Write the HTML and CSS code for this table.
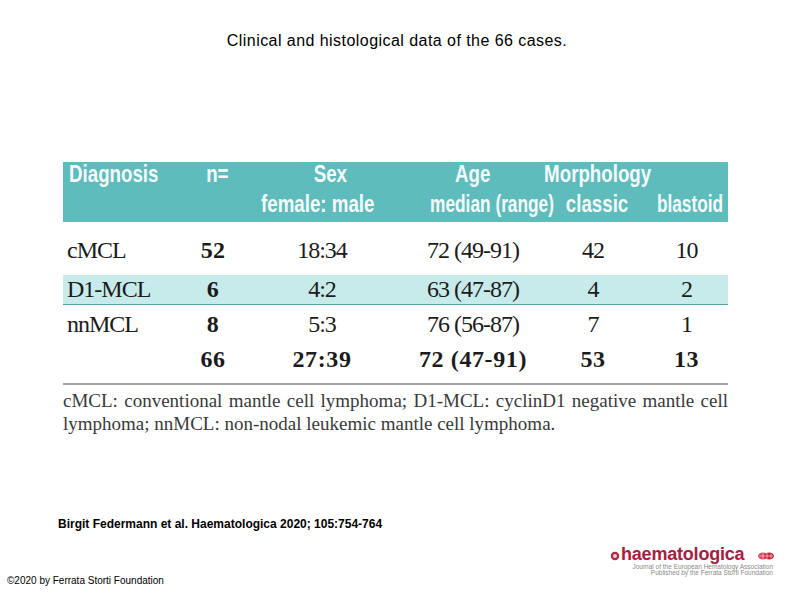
FILE: index.html
```html
<!DOCTYPE html>
<html lang="en">
<head>
<meta charset="utf-8">
<title>Clinical and histological data of the 66 cases.</title>
<link rel="stylesheet" href="styles.css">
</head>
<body>
<div class="page">
  <h1 class="title">Clinical and histological data of the 66 cases.</h1>

  <div class="figure">
    <div class="thead">
      <span class="h c1 r1 left"><span class="sq">Diagnosis</span></span>
      <span class="h c2 r1 sh-n"><span class="sq">n=</span></span>
      <span class="h c3 r1 sh-sex"><span class="sq">Sex</span></span>
      <span class="h c4 r1"><span class="sq">Age</span></span>
      <span class="h c5 r1 sh-morph"><span class="sq">Morphology</span></span>
      <span class="h c3 r2 sh-fm"><span class="sq">female: male</span></span>
      <span class="h c4 r2 sh-med"><span class="sq">median (range)</span></span>
      <span class="h c5 r2 sh-cl"><span class="sq">classic</span></span>
      <span class="h c6 r2 sh-bl"><span class="sq">blastoid</span></span>
    </div>

    <div class="row row-1">
      <span class="cell left">cMCL</span>
      <span class="cell b">52</span>
      <span class="cell">18:34</span>
      <span class="cell">72 (49-91)</span>
      <span class="cell">42</span>
      <span class="cell last">10</span>
    </div>
    <div class="row row-band">
      <span class="cell left">D1-MCL</span>
      <span class="cell b">6</span>
      <span class="cell">4:2</span>
      <span class="cell">63 (47-87)</span>
      <span class="cell">4</span>
      <span class="cell last">2</span>
    </div>
    <div class="row row-3">
      <span class="cell left">nnMCL</span>
      <span class="cell b">8</span>
      <span class="cell">5:3</span>
      <span class="cell">76 (56-87)</span>
      <span class="cell">7</span>
      <span class="cell last">1</span>
    </div>
    <div class="row row-total">
      <span class="cell left"></span>
      <span class="cell b">66</span>
      <span class="cell b">27:39</span>
      <span class="cell b">72 (47-91)</span>
      <span class="cell b">53</span>
      <span class="cell b last">13</span>
    </div>

    <div class="rule"></div>
    <p class="note">cMCL: conventional mantle cell lymphoma; D1-MCL: cyclinD1 negative mantle cell lymphoma; nnMCL: non-nodal leukemic mantle cell lymphoma.</p>
  </div>

  <p class="cite">Birgit Federmann et al. Haematologica 2020; 105:754-764</p>

  <div class="foot">
    <p class="copy">©2020 by Ferrata Storti Foundation</p>
    <div class="logo">
      <div class="logo-top">
        <svg class="logo-icon" width="10" height="10" viewBox="0 0 10 10" aria-hidden="true">
          <circle cx="5" cy="5" r="4.2" fill="#b3263f"/>
          <circle cx="5" cy="5" r="2" fill="#e9d3d6"/>
        </svg>
        <span class="logo-word">haematologica</span>
        <svg class="logo-cells" width="18" height="10" viewBox="0 0 18 10" aria-hidden="true">
          <ellipse cx="6" cy="5" rx="5" ry="3.5" fill="#d9485a"/>
          <ellipse cx="12" cy="5" rx="5" ry="3.5" fill="#c8283f"/>
          <path d="M2 5h14M6 2v6M10 2v6M14 3v4" stroke="#f3b7bf" stroke-width="0.8"/>
        </svg>
      </div>
      <div class="logo-sub">Journal of the European Hematology Association</div>
      <div class="logo-sub">Published by the Ferrata Storti Foundation</div>
    </div>
  </div>
</div>
</body>
</html>
```

FILE: styles.css
```css
html, body {
  margin: 0;
  padding: 0;
  background: #ffffff;
}

.page {
  width: 794px;
  height: 595px;
  padding-top: 31px;
  box-sizing: border-box;
  display: flex;
  flex-direction: column;
  font-family: "Liberation Sans", Arial, sans-serif;
  color: #000;
}

.title {
  margin: 0;
  font-size: 16px;
  line-height: 19px;
  font-weight: normal;
  letter-spacing: 0.45px;
  text-align: center;
}

.figure {
  margin: 112px 0 0 63px;
  width: 665px;
}

/* ---------- table header ---------- */
.thead {
  display: grid;
  grid-template-columns: 110px 80px 138px 164px 76px 97px;
  grid-template-rows: 24px 24px;
  row-gap: 6px;
  padding-bottom: 6px;
  background: #5fbcbd;
  color: #f4fbfb;
  font-family: "Liberation Sans", Arial, sans-serif;
  font-weight: bold;
  font-size: 24px;
  line-height: 24px;
}

.h {
  justify-self: center;
  white-space: nowrap;
}
.h .sq {
  display: inline-block;
  transform: scaleX(0.78);
  transform-origin: center;
}
.h.left { justify-self: start; padding-left: 6px; }
.h.left .sq { transform-origin: left center; }

.r1 { grid-row: 1; }
.r2 { grid-row: 2; }
.c1 { grid-column: 1; }
.c2 { grid-column: 2; }
.c3 { grid-column: 3; }
.c4 { grid-column: 4; }
.c5 { grid-column: 5; }
.c6 { grid-column: 6; }

.sh-n { margin-left: 9px; }
.sh-sex { margin-left: 16px; }
.sh-fm { margin-right: 8px; }
.sh-med { margin-left: 38px; }
.sh-med .sq { transform: scaleX(0.72); }
.sh-morph { margin-left: 10px; }
.sh-cl { margin-left: 8px; }
.sh-bl { margin-left: 20px; }
.sh-bl .sq { transform: scaleX(0.72); }

/* ---------- table body ---------- */
.row {
  display: grid;
  grid-template-columns: 110px 80px 138px 164px 76px 97px;
  height: 30px;
  font-family: "Liberation Serif", "Times New Roman", serif;
  font-size: 24px;
  line-height: 30px;
  letter-spacing: -1px;
  color: #1b1b1b;
}

.cell {
  text-align: center;
  white-space: nowrap;
}
.cell.left { text-align: left; padding-left: 4px; }
.cell.last { padding-left: 14px; }
.cell.b { font-weight: bold; letter-spacing: 0.3px; }

.row-1 { margin-top: 13px; }
.row-band {
  margin-top: 10px;
  height: 29px;
  line-height: 29px;
  background: #c7eaea;
  border-bottom: 1.5px solid #5d9fa1;
}
.row-3 { margin-top: 4px; }
.row-total { margin-top: 5px; }
.row-total .cell.b { letter-spacing: 0.6px; }

.rule {
  margin-top: 9px;
  height: 2px;
  background: #a3a3a3;
}

.note {
  margin: 4px 0 0 0;
  font-family: "Liberation Serif", "Times New Roman", serif;
  font-size: 19px;
  line-height: 23px;
  color: #3a3a3a;
  text-align: justify;
}

/* ---------- citation & footer ---------- */
.cite {
  margin: 82px 0 0 58px;
  font-size: 12px;
  line-height: 14px;
  font-weight: bold;
}

.foot {
  margin-top: 14px;
  display: flex;
  justify-content: space-between;
  align-items: flex-end;
  padding: 0 19px 0 7px;
}

.copy {
  margin: 0;
  font-size: 10px;
  line-height: 12px;
}

.logo {
  margin-bottom: 11px;
  display: flex;
  flex-direction: column;
  align-items: flex-end;
  width: 165px;
}

.logo-top {
  display: flex;
  align-items: center;
  gap: 1px;
  width: 100%;
  height: 19px;
}

.logo-icon { margin-top: 2px; }

.logo-word {
  font-family: "Liberation Sans", Arial, sans-serif;
  font-weight: bold;
  font-size: 18px;
  line-height: 19px;
  color: #a5203e;
  letter-spacing: -0.2px;
}

.logo-cells { margin-left: auto; margin-top: 2px; }

.logo-sub {
  font-size: 6.5px;
  line-height: 6px;
  color: #8a8a8a;
  white-space: nowrap;
  padding-right: 2px;
}
```
